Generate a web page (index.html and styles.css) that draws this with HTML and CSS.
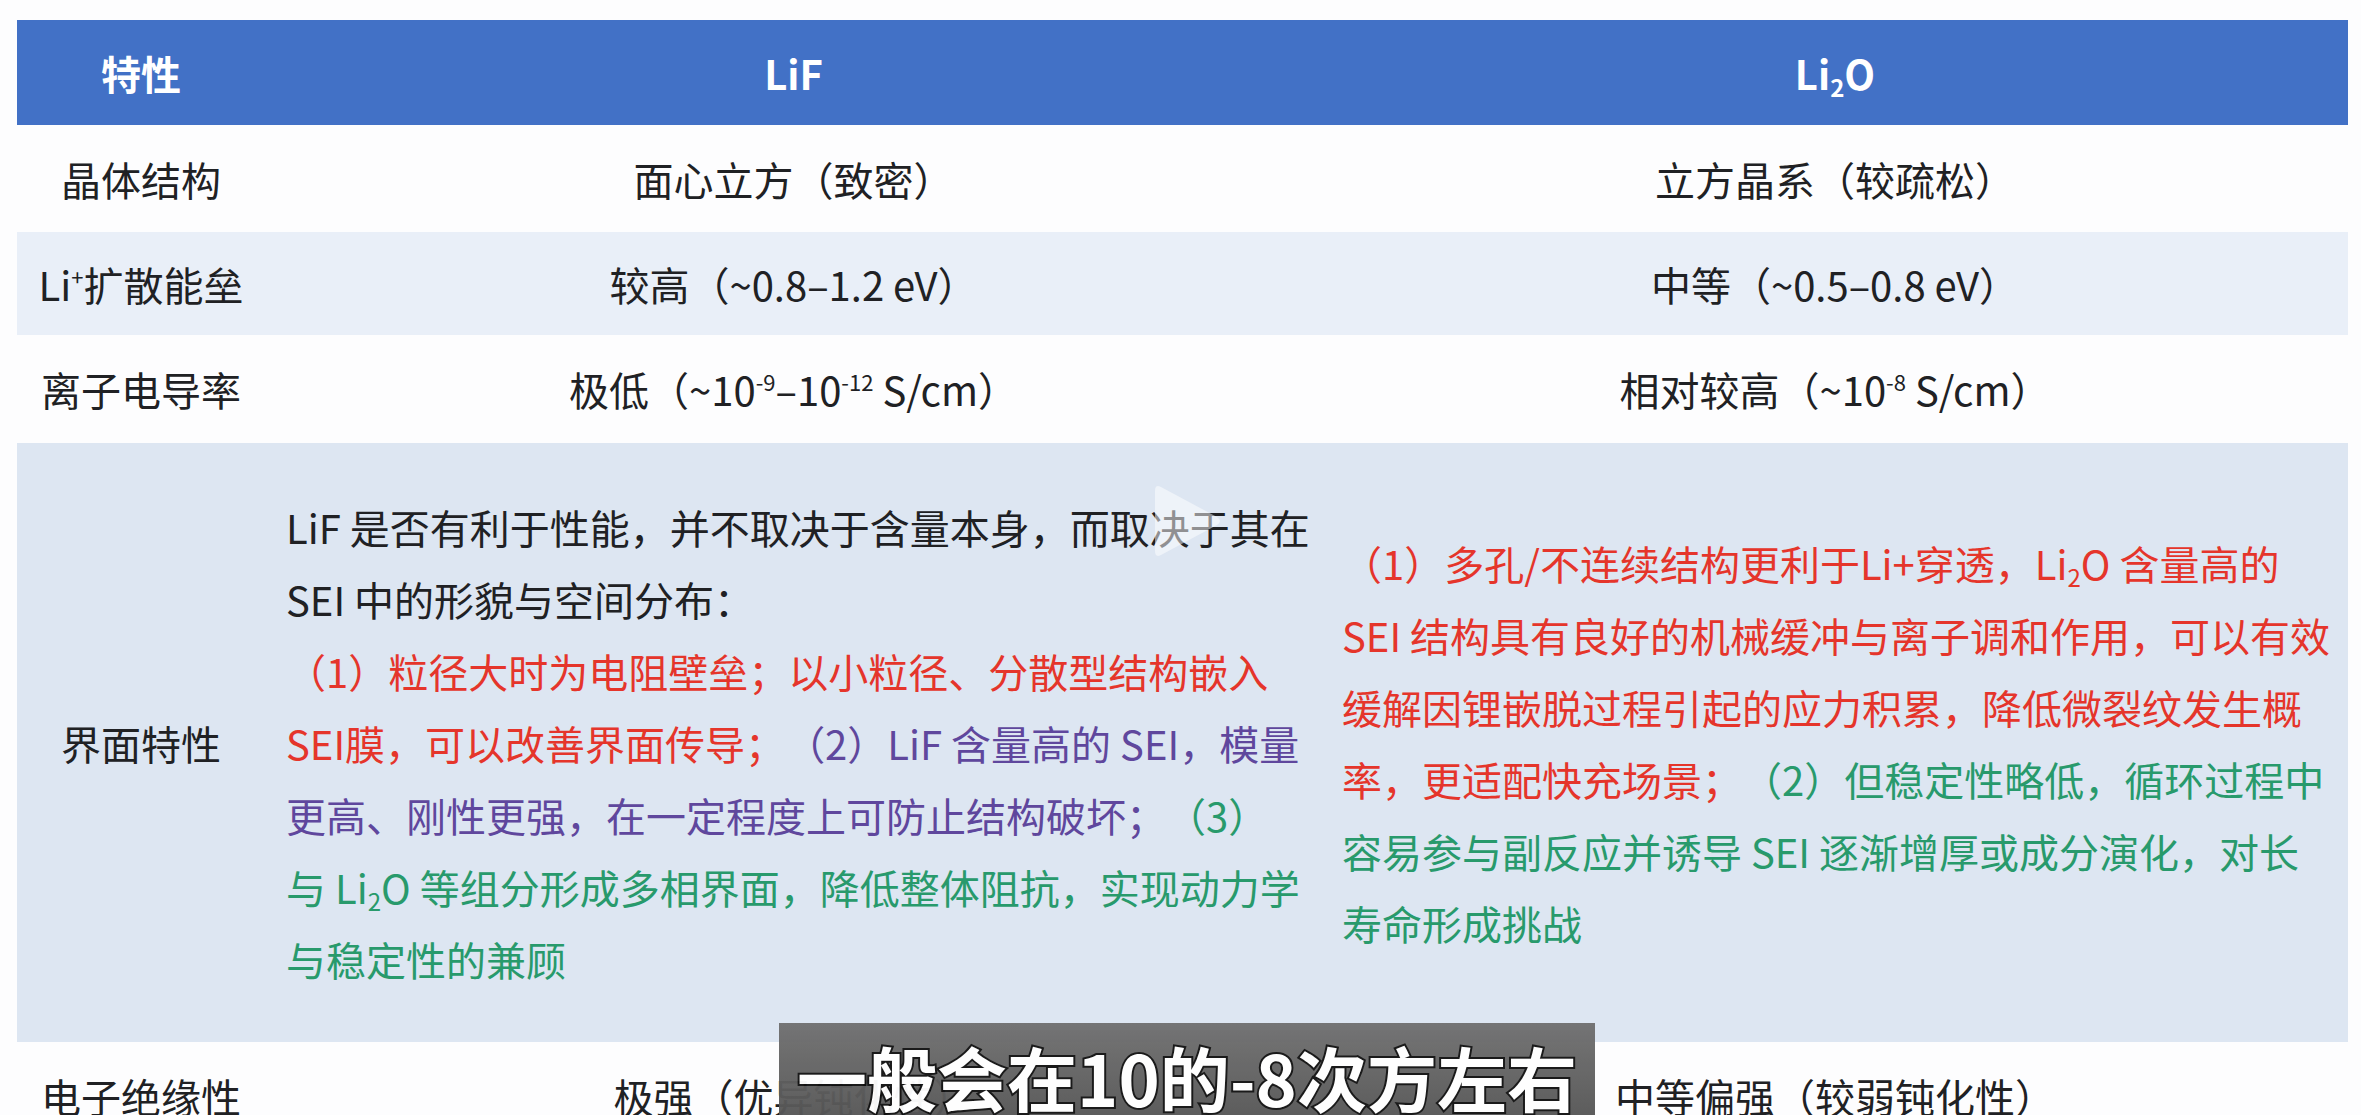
FILE: index.html
```html
<!DOCTYPE html>
<html lang="zh-CN">
<head>
<meta charset="utf-8">
<title>LiF 与 Li2O 特性对比</title>
<link rel="stylesheet" href="styles.css">
</head>
<body>
<div class="page">
  <div class="table">
    <div class="row head">
      <div class="cell">特性</div>
      <div class="cell">LiF</div>
      <div class="cell">Li<span class="sub">2</span>O</div>
    </div>
    <div class="row r1">
      <div class="cell">晶体结构</div>
      <div class="cell">面心立方（致密）</div>
      <div class="cell">立方晶系（较疏松）</div>
    </div>
    <div class="row r2 alt">
      <div class="cell">Li<span class="sup">+</span>扩散能垒</div>
      <div class="cell">较高（~0.8–1.2 eV）</div>
      <div class="cell">中等（~0.5–0.8 eV）</div>
    </div>
    <div class="row r3">
      <div class="cell">离子电导率</div>
      <div class="cell">极低（~10<span class="sup">-9</span>–10<span class="sup">-12</span> S/cm）</div>
      <div class="cell">相对较高（~10<span class="sup">-8</span> S/cm）</div>
    </div>
    <div class="row r4 alt2">
      <div class="cell">界面特性</div>
      <div class="cell text">
        <p>LiF 是否有利于性能，并不取决于含量本身，而取决于其在<br>SEI 中的形貌与空间分布：<br><span class="red">（1）粒径大时为电阻壁垒；以小粒径、分散型结构嵌入<br>SEI膜，可以改善界面传导；</span><span class="purple">（2）LiF 含量高的 SEI，模量<br>更高、刚性更强，在一定程度上可防止结构破坏；</span><span class="green">（3）<br>与 Li<span class="sub">2</span>O 等组分形成多相界面，降低整体阻抗，实现动力学<br>与稳定性的兼顾</span></p>
      </div>
      <div class="cell text">
        <p><span class="red">（1）多孔/不连续结构更利于Li+穿透，Li<span class="sub">2</span>O 含量高的<br>SEI 结构具有良好的机械缓冲与离子调和作用，可以有效<br>缓解因锂嵌脱过程引起的应力积累，降低微裂纹发生概<br>率，更适配快充场景；</span><span class="green">（2）但稳定性略低，循环过程中<br>容易参与副反应并诱导 SEI 逐渐增厚或成分演化，对长<br>寿命形成挑战</span></p>
      </div>
    </div>
    <div class="row r5">
      <div class="cell">电子绝缘性</div>
      <div class="cell">极强（优异钝化性）</div>
      <div class="cell">中等偏强（较弱钝化性）</div>
    </div>
  </div>

  <svg class="play" viewBox="0 0 70 80" width="70" height="80" aria-hidden="true">
    <path d="M8 6 Q2 3 2 10 L2 70 Q2 77 8 74 L64 44 Q70 40 64 36 Z" fill="#ffffff" fill-opacity="0.5"/>
  </svg>

  <div class="subtitle"><span class="subtitle-text">一般会在10的-8次方左右</span></div>
</div>
</body>
</html>
```

FILE: styles.css
```css
html, body {
  margin: 0;
  padding: 0;
  overflow: hidden;
  background: #fdfdfe;
}

body {
  font-family: "Noto Sans CJK SC", "Noto Sans", "Liberation Sans", sans-serif;
  color: #202124;
  text-spacing-trim: space-all;
}

.page {
  position: relative;
  width: 2361px;
  height: 1115px;
  padding: 20px 0 0 17px;
  box-sizing: border-box;
}

.table {
  width: 2331px;
  display: flex;
  flex-direction: column;
}

.row {
  display: grid;
  grid-template-columns: 248px 1057px 1026px;
  align-items: center;
  font-size: 40px;
  line-height: 1.2;
}

.cell {
  text-align: center;
  white-space: nowrap;
}

.head {
  height: 105px;
  background: #4271c6;
  color: #ffffff;
  font-weight: 700;
}

.r1 { height: 107px; background: #fdfdfe; }
.r2 { height: 103px; }
.r3 { height: 108px; background: #fdfdfe; }
.r4 { height: 599px; }
.r5 { height: 107px; background: #fdfdfe; }

.alt { background: #e9eff8; }
.alt2 { background: #dde6f2; }

.cell.text {
  text-align: left;
  line-height: 72px;
}

.r4 .cell.text:nth-child(2) { padding-left: 21px; }
.r4 .cell.text:nth-child(3) { padding-left: 20px; }

.cell.text p {
  margin: 0;
}

.red { color: #e5352b; }
.purple { color: #5f479d; }
.green { color: #289a6c; }

.sup {
  font-size: 0.55em;
  vertical-align: 0.7em;
  line-height: 0;
}

.sub {
  font-size: 0.6em;
  vertical-align: -0.3em;
  line-height: 0;
}

.play {
  position: absolute;
  left: 1153px;
  top: 481px;
}

.subtitle {
  position: absolute;
  left: 779px;
  top: 1023px;
  width: 816px;
  height: 130px;
  background: linear-gradient(#707070, #4c4c4c);
  opacity: 0.96;
  display: flex;
  justify-content: center;
}

.subtitle-text {
  margin-top: 12px;
  font-size: 70px;
  line-height: 1.2;
  font-weight: 700;
  color: #ffffff;
  -webkit-text-stroke: 4px #111111;
  paint-order: stroke fill;
  white-space: nowrap;
}
```
